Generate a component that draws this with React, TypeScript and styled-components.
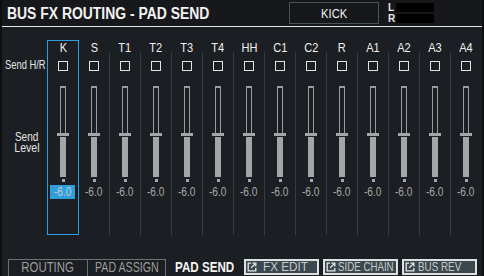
import React from "react";
import styled, { createGlobalStyle } from "styled-components";

const GlobalStyle = createGlobalStyle`
  html, body {
    margin: 0;
    padding: 0;
    background: #1b1e22;
  }
  body {
    font-family: "Liberation Sans", Arial, sans-serif;
  }
`;

// the unit's font is a condensed grotesk; squeeze Liberation Sans to match
const Narrow = styled.span<{ $x: number; $origin?: string }>`
  display: inline-block;
  flex-shrink: 0;
  white-space: nowrap;
  transform: scaleX(${(p) => p.$x});
  transform-origin: ${(p) => p.$origin ?? "center"};
`;

const Screen = styled.div`
  width: 484px;
  height: 276px;
  box-sizing: border-box;
  border-left: 2px solid #0c0e10;
  border-right: 2px solid #0c0e10;
  background: #1b1e22;
  display: flex;
  flex-direction: column;
  overflow: hidden;
`;

const TitleBar = styled.div`
  height: 26px;
  border-bottom: 1px solid #e6e6e6;
  background: #16181b;
  display: flex;
  align-items: center;
  padding: 0 48px 0 5px;
`;

const Title = styled.div`
  flex: 1;
  color: #f2f2f2;
  font-size: 16px;
  font-weight: bold;
  padding-top: 2px;
`;

const NameBox = styled.div`
  width: 90px;
  height: 22px;
  box-sizing: border-box;
  border: 1px solid #46535a;
  color: #f2f2f2;
  font-size: 13px;
  display: flex;
  align-items: center;
  justify-content: center;
`;

const Meter = styled.div`
  margin-left: 9px;
  display: grid;
  grid-template-columns: 8px 38px;
  row-gap: 2px;
  align-items: center;
`;

const MeterLetter = styled.span`
  color: #e6e6e6;
  font-size: 10px;
  font-weight: bold;
  line-height: 9px;
`;

const MeterBar = styled.div`
  height: 9px;
  background: #000;
`;

const Main = styled.div`
  flex: 1;
  display: flex;
  padding-top: 13px;
`;

const LabelCol = styled.div`
  width: 45px;
  color: #e4e4e4;
`;

const HrLabel = styled.div`
  margin-top: 18px;
  padding-left: 3px;
  font-size: 12px;
  line-height: 14px;
`;

const LevelLabel = styled.div`
  margin-top: 60px;
  padding-left: 5px;
  display: flex;
  flex-direction: column;
  align-items: center;
  font-size: 12.5px;
  line-height: 10.5px;
`;

const Column = styled.div<{ $selected: boolean }>`
  position: relative;
  width: 31px;
  height: 195px;
  display: flex;
  flex-direction: column;
  align-items: center;

  &::before {
    content: "";
    position: absolute;
    left: 0;
    top: 12px;
    bottom: 0;
    width: 1px;
    background: #363d42;
  }

  &::after {
    content: "";
    display: ${(p) => (p.$selected ? "block" : "none")};
    position: absolute;
    z-index: 1;
    left: 0;
    right: -1px;
    top: 0;
    bottom: 0;
    border: 1px solid #2a9fe0;
  }
`;

const ChLabel = styled.div`
  height: 15px;
  line-height: 15px;
  font-size: 13px;
  color: #f0f0f0;
  padding-left: 1px;
`;

const Check = styled.div`
  margin-top: 6px;
  width: 10px;
  height: 10px;
  box-sizing: border-box;
  border: 1px solid #e2e2e2;
`;

const Fader = styled.div`
  margin-top: 15px;
  display: flex;
  flex-direction: column;
  align-items: center;
  padding-left: 1px;
`;

const Track = styled.div<{ $h: number }>`
  width: 6px;
  height: ${(p) => p.$h}px;
  box-sizing: border-box;
  border: 1px solid #9a9ca0;
  border-top-width: 2px;
  border-bottom: none;
`;

const Knob = styled.div`
  width: 12px;
  height: 3px;
  background: #a4a5a9;
`;

const Fill = styled.div<{ $h: number }>`
  margin-top: 1px;
  width: 6px;
  height: ${(p) => p.$h}px;
  background: #a4a5a9;
`;

const Foot = styled.div`
  margin-top: 2px;
  width: 3px;
  height: 3px;
  background: #a4a5a9;
`;

const Value = styled.div<{ $selected: boolean }>`
  margin-top: 3px;
  width: 25px;
  height: 14px;
  line-height: 14px;
  text-align: center;
  font-size: 13.5px;
  color: ${(p) => (p.$selected ? "#c2ccd4" : "#a8a8a8")};
  background: ${(p) => (p.$selected ? "#2f9fdc" : "transparent")};
`;

const BottomRow = styled.div`
  height: 17px;
  display: flex;
  padding-left: 6px;
`;

const Tab = styled.div<{ $w: number; $active?: boolean }>`
  width: ${(p) => p.$w}px;
  height: 20px;
  box-sizing: border-box;
  margin-right: -1px;
  display: flex;
  justify-content: center;
  border: 1px solid ${(p) => (p.$active ? "transparent" : "#6c7074")};
  color: ${(p) => (p.$active ? "#f4f4f4" : "#9c9c9c")};
  font-weight: ${(p) => (p.$active ? "bold" : "normal")};
  font-size: ${(p) => (p.$active ? 14 : 15)}px;
  line-height: 14px;
`;

const Buttons = styled.div`
  margin-left: 1px;
  display: flex;
  gap: 4px;
`;

const Button = styled.div`
  width: 75px;
  height: 16px;
  box-sizing: border-box;
  border: 2px solid #dde1e2;
  background: #3b484e;
  display: flex;
  align-items: center;
  padding-left: 1px;
`;

const IconBox = styled.svg`
  flex-shrink: 0;
  display: block;
`;

const ButtonText = styled.span<{ $gap: number }>`
  margin-left: ${(p) => p.$gap}px;
  flex-shrink: 0;
  color: #c6cacc;
  font-size: 13.5px;
  line-height: 12px;
`;

const LinkIcon = () => (
  <IconBox width="10" height="10" viewBox="0 0 10 10" fill="none" stroke="#e4e8e8" strokeWidth="1.3">
    <path d="M4 1.2H1.2V8.8H8.8V6" />
    <path d="M4.2 5.8L8.6 1.4" />
    <path d="M5.4 1.2H8.8V4.6" />
  </IconBox>
);

const channels = ["K", "S", "T1", "T2", "T3", "T4", "HH", "C1", "C2", "R", "A1", "A2", "A3", "A4"];

const buttons = [
  { label: "FX EDIT", gap: 6, squeeze: 0.87 },
  { label: "SIDE CHAIN", gap: 2, squeeze: 0.72 },
  { label: "BUS REV", gap: 3, squeeze: 0.73 },
];

const App = () => {
  const selected = 0;

  return (
    <>
      <GlobalStyle />
      <Screen>
        <TitleBar>
          <Title>
            <Narrow $x={0.87} $origin="left">BUS FX ROUTING - PAD SEND</Narrow>
          </Title>
          <NameBox>
            <Narrow $x={0.86}>KICK</Narrow>
          </NameBox>
          <Meter>
            <MeterLetter>L</MeterLetter>
            <MeterBar />
            <MeterLetter>R</MeterLetter>
            <MeterBar />
          </Meter>
        </TitleBar>

        <Main>
          <LabelCol>
            <HrLabel>
              <Narrow $x={0.78} $origin="left">Send H/R</Narrow>
            </HrLabel>
            <LevelLabel>
              <Narrow $x={0.8}>Send</Narrow>
              <Narrow $x={0.85}>Level</Narrow>
            </LevelLabel>
          </LabelCol>
          {channels.map((ch, i) => (
            <Column key={ch} $selected={i === selected}>
              <ChLabel>
                <Narrow $x={0.85}>{ch}</Narrow>
              </ChLabel>
              <Check />
              <Fader>
                <Track $h={47} />
                <Knob />
                <Fill $h={40} />
                <Foot />
              </Fader>
              <Value $selected={i === selected}>
                <Narrow $x={0.75}>-6.0</Narrow>
              </Value>
            </Column>
          ))}
        </Main>

        <BottomRow>
          <Tab $w={80}>
            <Narrow $x={0.76}>ROUTING</Narrow>
          </Tab>
          <Tab $w={79}>
            <Narrow $x={0.71}>PAD ASSIGN</Narrow>
          </Tab>
          <Tab $w={79} $active>
            <Narrow $x={0.83}>PAD SEND</Narrow>
          </Tab>
          <Buttons>
            {buttons.map((b) => (
              <Button key={b.label}>
                <LinkIcon />
                <ButtonText $gap={b.gap}>
                  <Narrow $x={b.squeeze} $origin="left">{b.label}</Narrow>
                </ButtonText>
              </Button>
            ))}
          </Buttons>
        </BottomRow>
      </Screen>
    </>
  );
};

export default App;
